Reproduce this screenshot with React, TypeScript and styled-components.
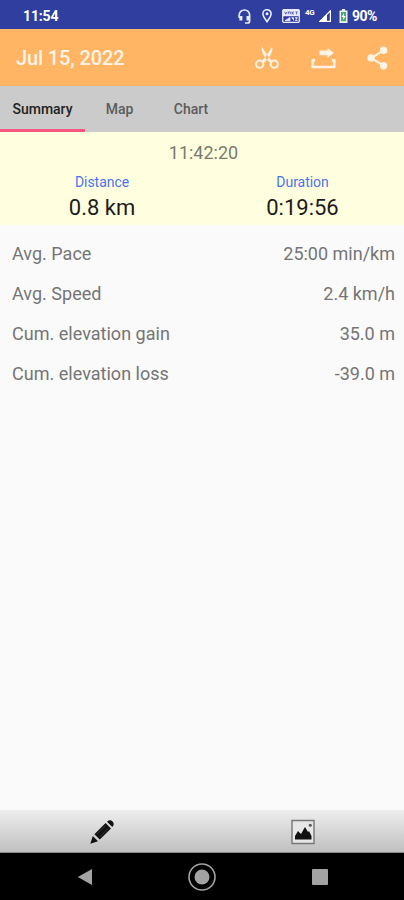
import React from 'react';
import styled, { createGlobalStyle } from 'styled-components';

const GlobalStyle = createGlobalStyle`
  * { box-sizing: border-box; }
  body { margin: 0; background: #fafafa; }
`;

const Screen = styled.div`
  width: 404px;
  height: 900px;
  display: flex;
  flex-direction: column;
  background: #fafafa;
  color: #757575;
  font-family: Roboto, sans-serif;
  overflow: hidden;
`;

const StatusBar = styled.header`
  height: 29px;
  flex: none;
  display: flex;
  align-items: center;
  padding: 3px 25px 0 23px;
  background: #303f9f;
  color: #fff;
`;

const Clock = styled.span`
  flex: 1;
  font-size: 14px;
  font-weight: 700;
  line-height: 16px;
  letter-spacing: -0.15px;
`;

const StatusIcons = styled.div`
  display: flex;
  align-items: center;
`;

const StatusGlyph = styled.svg<{ $gap: number }>`
  display: block;
  flex: none;
  margin-right: ${(p) => p.$gap}px;
`;

const Network = styled.span`
  width: 10px;
  height: 14px;
  margin-right: 4px;
  font-size: 8px;
  line-height: 8px;
  font-weight: 700;
  letter-spacing: -0.4px;
`;

const Battery = styled.span`
  width: 27px;
  font-size: 14px;
  line-height: 16px;
  font-weight: 700;
  letter-spacing: -0.5px;
  white-space: nowrap;
`;

const Toolbar = styled.div`
  height: 57px;
  flex: none;
  display: flex;
  align-items: center;
  padding: 0 15px 0 16px;
  background: #ffb564;
  color: #fff3e5;
`;

const Title = styled.h1`
  flex: 1;
  margin: 0;
  font-size: 20px;
  line-height: 24px;
  font-weight: 500;
  letter-spacing: -0.13px;
`;

const Actions = styled.div`
  display: flex;
  align-items: center;
  gap: 31.5px;
`;

const IconButton = styled.button`
  display: block;
  padding: 0;
  border: 0;
  background: none;
  color: inherit;
  svg { display: block; }
`;

const Tabs = styled.nav`
  height: 46px;
  flex: none;
  display: flex;
  background: #cbcbcb;
`;

const Tab = styled.button<{ $width: number; $active?: boolean }>`
  width: ${(p) => p.$width}px;
  padding: 3px 0 0;
  border: 0;
  border-bottom: 3px solid ${(p) => (p.$active ? '#f5587f' : 'transparent')};
  background: none;
  color: ${(p) => (p.$active ? '#222' : '#5c5c5c')};
  font: 500 14px/16px Roboto, sans-serif;
  letter-spacing: 0;
`;

const Overview = styled.section`
  height: 93px;
  flex: none;
  padding-top: 10px;
  background: #ffffe0;
  text-align: center;
`;

const StartTime = styled.div`
  padding-left: 3px;
  font-size: 18px;
  line-height: 22px;
  color: #7b7b6c;
`;

const Totals = styled.div`
  display: grid;
  grid-template-columns: 204px 197px;
  margin-top: 10px;
`;

const TotalLabel = styled.div`
  font-size: 14px;
  line-height: 16px;
  letter-spacing: -0.05px;
  color: #4b74ea;
`;

const TotalValue = styled.div`
  margin-top: 5px;
  font-size: 22px;
  line-height: 26px;
  color: #1c1c18;
`;

const Stats = styled.dl`
  flex: 1;
  margin: 0;
  padding: 9px 9px 0 12px;
`;

const StatRow = styled.div`
  height: 40px;
  display: flex;
  align-items: center;
  justify-content: space-between;
  font-size: 18px;
  line-height: 22px;
`;

const StatText = styled.dt`
  letter-spacing: 0.02px;
`;

const StatValue = styled.dd`
  margin: 0;
`;

const BottomBar = styled.footer`
  height: 43px;
  flex: none;
  display: grid;
  grid-template-columns: 1fr 1fr;
  place-items: center;
  padding: 2px 0 0 1px;
  background: linear-gradient(#eeeeee, #c0c0c0);
  border-bottom: 1px solid #888;
`;

const SystemNav = styled.nav`
  height: 47px;
  flex: none;
  display: flex;
  align-items: center;
  justify-content: space-between;
  padding: 0 76.5px 0 77px;
  background: #000;
  color: #a3a3a3;
`;

const stats = [
  ['Avg. Pace', '25:00 min/km'],
  ['Avg. Speed', '2.4 km/h'],
  ['Cum. elevation gain', '35.0 m'],
  ['Cum. elevation loss', '-39.0 m'],
];

const Headphones = () => (
  <StatusGlyph $gap={11} width="13" height="15" viewBox="0 0 13 15" fill="none" stroke="#e8ebff">
    <path d="M1.2 9V6a5.2 5 0 0 1 10.4 0v6q0 2-2 2H7" strokeWidth="1.7" />
    <path d="M2.9 7v4.5M10 7v4.5" strokeWidth="3" />
  </StatusGlyph>
);

const Pin = () => (
  <StatusGlyph $gap={10} width="10" height="14" viewBox="0 0 10 14" fill="none" stroke="#e8ebff" strokeWidth="1.6">
    <path d="M5 12.7C3 10 .9 7.2 .9 4.8a4.1 4.1 0 0 1 8.2 0C9.1 7.2 7 10 5 12.7Z" />
    <circle cx="5" cy="4.8" r="1.5" fill="#e8ebff" stroke="none" />
  </StatusGlyph>
);

const VoiceNetwork = () => (
  <StatusGlyph $gap={5} width="18" height="14" viewBox="0 0 18 14">
    <rect x=".7" y=".7" width="16.6" height="12.6" rx="1" fill="none" stroke="#e8ebff" strokeWidth="1.3" />
    <path d="M1 1h16v6.2H1z" fill="#e8ebff" />
    <path d="m2.5 2.7 1.3 2.5L5 2.7M6.3 5.2V2.9h2v2.3M10 2.6v2.8m2-2.8L10 4l2 1.4M13.5 3h2.2m-1.1 0v2.4" fill="none" stroke="#53609f" strokeWidth=".9" />
    <path d="M3 11.7 8 8.5v3.2zM9.5 8.7h2v2.8m1.4-2.8h2.6l-2.2 2.8h2.4" fill="#e8ebff" stroke="#e8ebff" strokeWidth=".8" />
  </StatusGlyph>
);

const Signal = () => (
  <StatusGlyph $gap={8} width="12" height="12" viewBox="0 0 12 12">
    <path d="M.8 11.4 11.4.8v10.6z" fill="none" stroke="#fff" strokeWidth="1.2" />
    <path d="M.5 11.5 8 4v7.5z" fill="#fff" />
  </StatusGlyph>
);

const BatteryIcon = () => (
  <StatusGlyph $gap={4} width="9" height="14" viewBox="0 0 9 14">
    <path d="M3 0h3v1.5h2.5V14h-8V1.5H3z" fill="#e9f3f0" />
    <path d="M2 3h5v9.2H2z" fill="#54a66e" />
    <path d="M5 4 2.6 8h1.7v3l2.3-4H5z" fill="#fff" />
  </StatusGlyph>
);

const Scissors = () => (
  <svg width="24" height="24" viewBox="0 0 24 24" fill="none" stroke="currentColor" strokeWidth="2">
    <circle cx="4.7" cy="18.2" r="3.6" />
    <circle cx="19.3" cy="18.2" r="3.6" />
    <path d="M6.9.8Q5.8 5 8.8 9.5L11 13 15.8 17.4l1.6-2.4L13.7 11.2zM17.1.8q1.1 4.2-1.9 8.7L13 13l-4.8 4.4L6.6 15l3.7-3.8z" fill="currentColor" stroke="none" />
  </svg>
);

const Export = () => (
  <svg width="25" height="24" viewBox="0 0 25 24" fill="none" stroke="currentColor">
    <path d="M4.2 14.3H1.7V21h21.6v-6.7h-2.5" strokeWidth="2.5" strokeLinejoin="round" />
    <path d="M8.5 4.6h8V1.9L23 6.9l-6.5 5V9.2h-8z" fill="currentColor" stroke="none" />
  </svg>
);

const Share = () => (
  <svg width="22" height="24" viewBox="0 0 22 24" fill="currentColor">
    <path d="M16.6 4.4 4.1 12l12.5 7.6" fill="none" stroke="currentColor" strokeWidth="2.1" />
    <circle cx="16.6" cy="4.3" r="3.7" />
    <circle cx="4.1" cy="12" r="3.7" />
    <circle cx="16.6" cy="19.7" r="3.7" />
  </svg>
);

const Pencil = () => (
  <svg width="24" height="24" viewBox="0 0 24 24">
    <path d="M.3 23.7 2.8 16 8 21.2zM4.4 14.2 15.6 3l5.4 5.4L9.8 19.6zM17 1.7Q20-1 22.6 1.4 25 4 22.3 7z" fill="#111" />
    <path d="m7.1 14.1 8.5-8.5M9.8 16.8l8.5-8.5" fill="none" stroke="#444" strokeWidth=".7" />
  </svg>
);

const Picture = () => (
  <svg width="24" height="26" viewBox="0 0 24 26">
    <path d="M1 1.5h22v23H1z" fill="#e7e7e7" stroke="#777" strokeWidth="1.4" />
    <path d="M4 20.5V17l3-5 3 3 4-7 3 5 1-1 2.5 5v3.5z" fill="#111" />
    <circle cx="19.3" cy="6.2" r="1.5" fill="#555" />
  </svg>
);

export default function App() {
  return (
    <>
      <GlobalStyle />
      <Screen>
        <StatusBar>
          <Clock>11:54</Clock>
          <StatusIcons>
            <Headphones />
            <Pin />
            <VoiceNetwork />
            <Network>4G</Network>
            <Signal />
            <BatteryIcon />
            <Battery>90%</Battery>
          </StatusIcons>
        </StatusBar>
        <Toolbar>
          <Title>Jul 15, 2022</Title>
          <Actions>
            <IconButton aria-label="Trim"><Scissors /></IconButton>
            <IconButton aria-label="Export"><Export /></IconButton>
            <IconButton aria-label="Share"><Share /></IconButton>
          </Actions>
        </Toolbar>
        <Tabs>
          <Tab $width={85} $active>Summary</Tab>
          <Tab $width={69}>Map</Tab>
          <Tab $width={74}>Chart</Tab>
        </Tabs>
        <Overview>
          <StartTime>11:42:20</StartTime>
          <Totals>
            <div>
              <TotalLabel>Distance</TotalLabel>
              <TotalValue>0.8 km</TotalValue>
            </div>
            <div>
              <TotalLabel>Duration</TotalLabel>
              <TotalValue>0:19:56</TotalValue>
            </div>
          </Totals>
        </Overview>
        <Stats>
          {stats.map(([label, value]) => (
            <StatRow key={label}>
              <StatText>{label}</StatText>
              <StatValue>{value}</StatValue>
            </StatRow>
          ))}
        </Stats>
        <BottomBar>
          <IconButton aria-label="Edit"><Pencil /></IconButton>
          <IconButton aria-label="Photos"><Picture /></IconButton>
        </BottomBar>
        <SystemNav>
          <IconButton aria-label="Back">
            <svg width="16" height="18" viewBox="0 0 16 18"><path d="M.8 9 15 1v16z" fill="currentColor" /></svg>
          </IconButton>
          <IconButton aria-label="Home">
            <svg width="28" height="28" viewBox="0 0 28 28">
              <circle cx="14" cy="14" r="13" fill="none" stroke="currentColor" strokeWidth="1.6" />
              <circle cx="14" cy="14" r="7.5" fill="currentColor" />
            </svg>
          </IconButton>
          <IconButton aria-label="Recent apps">
            <svg width="16" height="16" viewBox="0 0 16 16"><rect width="16" height="16" rx="1" fill="currentColor" /></svg>
          </IconButton>
        </SystemNav>
      </Screen>
    </>
  );
}
